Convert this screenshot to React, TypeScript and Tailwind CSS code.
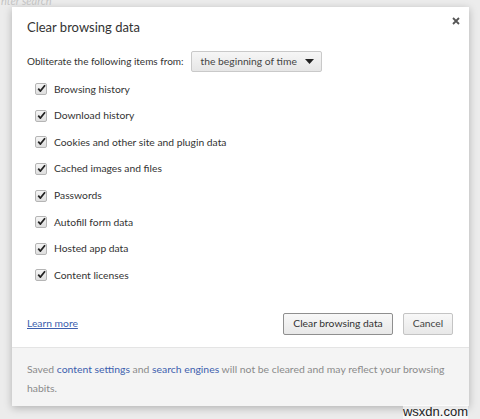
import React from "react";

const items = [
  "Browsing history",
  "Download history",
  "Cookies and other site and plugin data",
  "Cached images and files",
  "Passwords",
  "Autofill form data",
  "Hosted app data",
  "Content licenses",
];

function CheckBox() {
  return (
    <span className="flex h-[12px] w-[12px] items-center justify-center rounded-[2px] border border-[#b5b5b5] bg-gradient-to-b from-[#f5f5f5] to-[#dedede]">
      <svg width="11" height="11" viewBox="0 0 11 11" className="-mt-[1px] ml-[1px]">
        <path d="M1.5 5.8 L4.2 8.6 L9.8 1.6" fill="none" stroke="#222" strokeWidth="2.2" strokeLinejoin="round" />
      </svg>
    </span>
  );
}

export default function App() {
  return (
    <div
      className="relative h-[419px] w-[480px] overflow-hidden bg-[#ececec] text-[#333]"
      style={{ fontFamily: 'Lato, "Noto Sans", sans-serif' }}
    >
      <div className="h-[7px] overflow-hidden pl-[1px] text-[11px] italic leading-[2px] text-[#c4c4c4]">
        nter search
      </div>
      <div className="ml-[12px] flex h-[399px] w-[457px] flex-col bg-white shadow-[0_2px_8px_rgba(0,0,0,0.25)]">
        <div className="flex items-start justify-between pl-[15px] pr-[9px] pt-[9px]">
          <h1 className="text-[13px] leading-[22px] text-[#333]">Clear browsing data</h1>
          <svg width="8" height="8" viewBox="0 0 8 8" className="mt-[1px]">
            <path d="M1 1 L7 7 M7 1 L1 7" stroke="#555" strokeWidth="1.8" />
          </svg>
        </div>
        <div className="mt-[13px] flex items-center pl-[15px] text-[10px]">
          <span>Obliterate the following items from:</span>
          <div className="ml-[7px] flex h-[21px] w-[131px] items-center justify-between whitespace-nowrap rounded-[2px] border border-[#c9c9c9] bg-gradient-to-b from-[#f6f6f6] to-[#e6e6e6] pl-[9px] pr-[7px] text-[10.3px] text-[#444]">
            <span>the beginning of time</span>
            <svg width="9" height="5" viewBox="0 0 9 5">
              <path d="M0 0 L9 0 L4.5 5 Z" fill="#222" />
            </svg>
          </div>
        </div>
        <ul className="mt-[4px] flex flex-col pl-[23px] text-[10.3px]">
          {items.map((t) => (
            <li key={t} className="flex h-[26.6px] items-center gap-[7px]">
              <CheckBox />
              <span>{t}</span>
            </li>
          ))}
        </ul>
        <div className="mt-[24px] flex items-center justify-between pl-[15px] pr-[16px] text-[10.3px]">
          <a className="text-[#3d5fae] underline">Learn more</a>
          <div className="flex gap-[10px]">
            <button className="h-[22px] w-[110px] rounded-[2px] border border-[#8f8f8f] bg-gradient-to-b from-[#f8f8f8] to-[#e8e8e8] text-[#333]">
              Clear browsing data
            </button>
            <button className="h-[22px] w-[50px] rounded-[2px] border border-[#c4c4c4] bg-gradient-to-b from-[#f8f8f8] to-[#e8e8e8] text-[#444]">
              Cancel
            </button>
          </div>
        </div>
        <p className="mt-[12px] flex-1 border-t border-[#e4e4e4] bg-[#f4f4f4] px-[15px] pt-[12px] text-[10.4px] leading-[19px] text-[#8a8a8a]">
          Saved <span className="text-[#3d5fae]">content settings</span> and{" "}
          <span className="text-[#3d5fae]">search engines</span> will not be cleared and may reflect your browsing
          habits.
        </p>
      </div>
      <div className="absolute bottom-[0px] right-[12px] bg-white/60 text-[13px] leading-[14px] text-[#222]" style={{ fontFamily: '"Liberation Sans", sans-serif' }}>
        wsxdn.com
      </div>
    </div>
  );
}
